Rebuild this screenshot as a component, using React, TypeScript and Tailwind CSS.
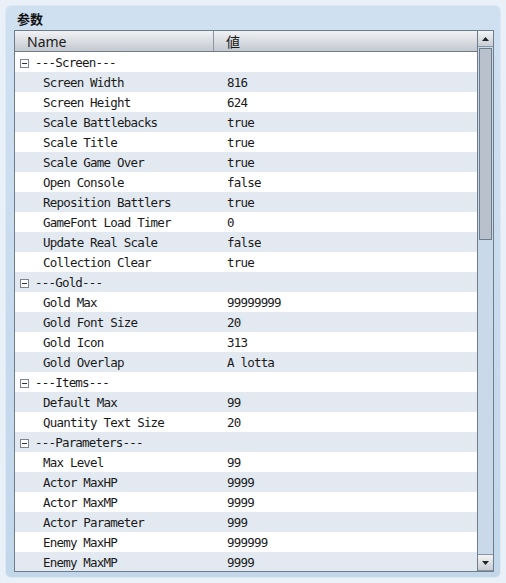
import React from "react";

type Row = { name: string; value?: string; group?: boolean };

const rows: Row[] = [
  { name: "---Screen---", group: true },
  { name: "Screen Width", value: "816" },
  { name: "Screen Height", value: "624" },
  { name: "Scale Battlebacks", value: "true" },
  { name: "Scale Title", value: "true" },
  { name: "Scale Game Over", value: "true" },
  { name: "Open Console", value: "false" },
  { name: "Reposition Battlers", value: "true" },
  { name: "GameFont Load Timer", value: "0" },
  { name: "Update Real Scale", value: "false" },
  { name: "Collection Clear", value: "true" },
  { name: "---Gold---", group: true },
  { name: "Gold Max", value: "99999999" },
  { name: "Gold Font Size", value: "20" },
  { name: "Gold Icon", value: "313" },
  { name: "Gold Overlap", value: "A lotta" },
  { name: "---Items---", group: true },
  { name: "Default Max", value: "99" },
  { name: "Quantity Text Size", value: "20" },
  { name: "---Parameters---", group: true },
  { name: "Max Level", value: "99" },
  { name: "Actor MaxHP", value: "9999" },
  { name: "Actor MaxMP", value: "9999" },
  { name: "Actor Parameter", value: "999" },
  { name: "Enemy MaxHP", value: "999999" },
  { name: "Enemy MaxMP", value: "9999" },
];

const mono = "font-['DejaVu_Sans_Mono',monospace] text-[12.5px] tracking-[-0.8px] text-[#1a1a1a]";

function Collapse() {
  return (
    <svg width="9" height="9" viewBox="0 0 9 9" className="shrink-0">
      <rect x="0.5" y="0.5" width="8" height="8" fill="#fff" stroke="#7a8592" />
      <path d="M2 4.5h5" stroke="#333" />
    </svg>
  );
}

function Arrow({ down }: { down?: boolean }) {
  return (
    <div className="h-[16px] flex items-center justify-center bg-gradient-to-b from-[#f2f3f5] to-[#c9ced5] border-b border-[#8a95a2]">
      <svg width="7" height="4" viewBox="0 0 7 4">
        <path d={down ? "M0 0h7L3.5 4z" : "M0 4h7L3.5 0z"} fill="#222" />
      </svg>
    </div>
  );
}

export default function App() {
  return (
    <div className="w-[506px] h-[583px] bg-[#e9f0f8] p-[5px] pb-[5px]">
      <div className="h-full rounded-[6px] bg-gradient-to-b from-[#cfe0f1] to-[#c3d7eb] border border-[#dde8f3] pl-[8px] pr-[6px] pb-[5px] flex flex-col">
        <div className="h-[24px] flex items-center pl-[3px] pt-[2px] text-[13px] font-bold text-[#111] font-['Noto_Sans_CJK_SC','Noto_Sans_CJK_JP',sans-serif]">
          参数
        </div>
        <div className="flex-1 flex border border-[#6f7c8b] bg-white overflow-hidden">
          <div className="flex-1 flex flex-col">
            <div className="h-[21px] shrink-0 flex bg-gradient-to-b from-[#f1f2f4] to-[#c4c9d0] border-b border-[#6f7c8b] text-[14px] text-[#1a1a1a] font-['Noto_Sans','Noto_Sans_CJK_JP',sans-serif]">
              <div className="w-[199px] border-r border-[#8c96a2] pl-[12px] flex items-center">Name</div>
              <div className="flex-1 pl-[12px] flex items-center font-['Noto_Sans_CJK_JP',sans-serif]">値</div>
            </div>
            {rows.map((r, i) => (
              <div
                key={r.name}
                className={`h-[20px] shrink-0 pt-[2px] flex items-center ${i % 2 === 0 ? "bg-white" : "bg-[#e3e9f0]"}`}
              >
                {r.group ? (
                  <div className={`w-[199px] flex items-center gap-[6px] pl-[5px] ${mono}`}>
                    <Collapse />
                    <span>{r.name}</span>
                  </div>
                ) : (
                  <>
                    <div className={`w-[199px] pl-[28px] ${mono}`}>{r.name}</div>
                    <div className={`flex-1 pl-[13px] ${mono}`}>{r.value}</div>
                  </>
                )}
              </div>
            ))}
          </div>
          <div className="w-[16px] shrink-0 flex flex-col bg-[#c9d9ea] border-l border-[#6f7c8b]">
            <Arrow />
            <div className="h-[192px] mx-[1px] mt-[1px] bg-[#b9c2cc] border border-[#6f7c8b]" />
            <div className="flex-1" />
            <div className="border-t border-[#8a95a2]">
              <Arrow down />
            </div>
          </div>
        </div>
      </div>
    </div>
  );
}
